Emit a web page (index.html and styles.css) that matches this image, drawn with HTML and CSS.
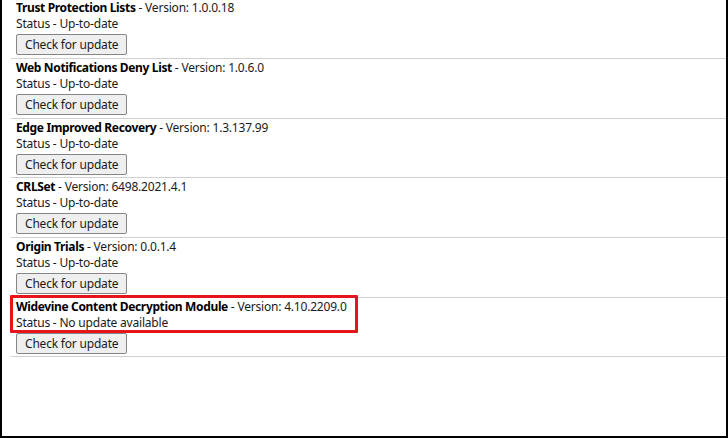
FILE: index.html
```html
<!DOCTYPE html>
<html lang="en">
<head>
<meta charset="utf-8">
<title>Components</title>
<link rel="stylesheet" href="styles.css">
</head>
<body>
<div class="frame">
  <div class="list">
    <div class="item">
      <div class="line"><span class="name">Trust Protection Lists</span> - Version: 1.0.0.18</div>
      <div class="line">Status - Up-to-date</div>
      <button class="btn">Check for update</button>
    </div>
    <div class="item">
      <div class="line"><span class="name">Web Notifications Deny List</span> - Version: 1.0.6.0</div>
      <div class="line">Status - Up-to-date</div>
      <button class="btn">Check for update</button>
    </div>
    <div class="item">
      <div class="line"><span class="name">Edge Improved Recovery</span> - Version: 1.3.137.99</div>
      <div class="line">Status - Up-to-date</div>
      <button class="btn">Check for update</button>
    </div>
    <div class="item">
      <div class="line"><span class="name">CRLSet</span> - Version: 6498.2021.4.1</div>
      <div class="line">Status - Up-to-date</div>
      <button class="btn">Check for update</button>
    </div>
    <div class="item">
      <div class="line"><span class="name">Origin Trials</span> - Version: 0.0.1.4</div>
      <div class="line">Status - Up-to-date</div>
      <button class="btn">Check for update</button>
    </div>
    <div class="item">
      <span class="highlight"></span>
      <div class="line"><span class="name">Widevine Content Decryption Module</span> - Version: 4.10.2209.0</div>
      <div class="line">Status - No update available</div>
      <button class="btn">Check for update</button>
    </div>
  </div>
</div>
</body>
</html>
```

FILE: styles.css
```css
html, body {
  margin: 0;
  padding: 0;
  background: #fff;
}
.frame {
  box-sizing: border-box;
  width: 728px;
  height: 438px;
  border-left: 2px solid #000;
  border-right: 2px solid #000;
  border-bottom: 2px solid #000;
  padding-left: 9px;
  overflow: hidden;
  font-family: "Noto Sans", "Open Sans", sans-serif;
  font-size: 12px;
  letter-spacing: -0.2px;
  color: #1a1a1a;
}
.list {
  margin-top: -0.7px;
}
.item {
  position: relative;
  box-sizing: border-box;
  height: 59.7px;
  padding: 1px 0 0 5px;
  border-bottom: 1px solid #d0d0d0;
}
.line {
  line-height: 16px;
  height: 16px;
  white-space: nowrap;
}
.name {
  font-weight: bold;
  letter-spacing: -0.35px;
  color: #000;
}
.btn {
  display: block;
  margin-top: 2px;
  height: 21px;
  padding: 0 8px;
  font-family: "Noto Sans", "Open Sans", sans-serif;
  font-size: 12px;
  letter-spacing: -0.2px;
  color: #1a1a1a;
  background: #efefef;
  border: 1px solid #858585;
  border-radius: 2px;
}
.highlight {
  position: absolute;
  left: -1px;
  top: -3px;
  width: 348px;
  height: 38px;
  box-sizing: border-box;
  border: 3px solid #e8141b;
  border-radius: 1px;
}
```
